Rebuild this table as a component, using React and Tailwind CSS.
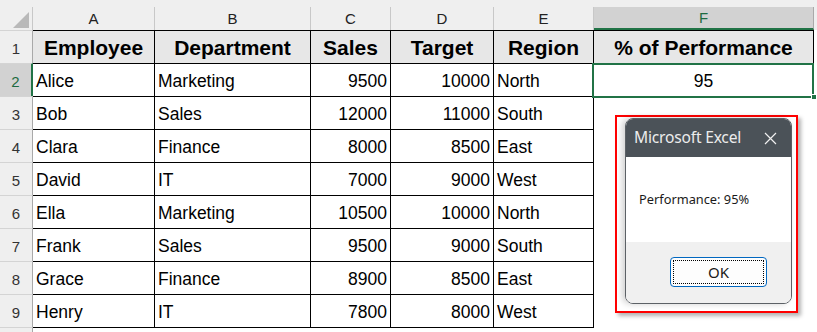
import React from "react";

const rows = [
  ["Alice", "Marketing", 9500, 10000, "North"],
  ["Bob", "Sales", 12000, 11000, "South"],
  ["Clara", "Finance", 8000, 8500, "East"],
  ["David", "IT", 7000, 9000, "West"],
  ["Ella", "Marketing", 10500, 10000, "North"],
  ["Frank", "Sales", 9500, 9000, "South"],
  ["Grace", "Finance", 8900, 8500, "East"],
  ["Henry", "IT", 7800, 8000, "West"],
];

const cols = [
  { l: "A", w: "w-[122px]" },
  { l: "B", w: "w-[156px]" },
  { l: "C", w: "w-[80px]" },
  { l: "D", w: "w-[103px]" },
  { l: "E", w: "w-[100px]" },
];

const font = { fontFamily: '"Liberation Sans", Arial, sans-serif' };

function RowHeader({ n, selected, last }) {
  return (
    <div
      className={`w-[33px] shrink-0 flex items-center justify-center pt-[5px] text-[15px] ${
        selected
          ? "bg-[#d2d2d2] text-[#1e6b41] border-r-2 border-r-[#217346]"
          : "bg-[#efefef] text-[#333] border-r border-r-[#a9a9a9]"
      } border-t border-t-[#d4d4d4] ${last ? "h-[34px] border-b border-b-[#d4d4d4]" : "h-[33px]"}`}
    >
      {n}
    </div>
  );
}

export default function App() {
  return (
    <div className="w-[817px] h-[332px] bg-white overflow-hidden relative select-none" style={font}>
      {/* Column header strip */}
      <div className="flex items-end h-[30px] bg-[#efefef]">
        <div className="w-[33px] h-[23px] shrink-0 border-r border-r-[#c8c8c8] flex items-end justify-end pr-[2px] pb-[2px]">
          <svg width="17" height="16" viewBox="0 0 17 16">
            <polygon points="16,0 16,16 0,16" fill="#b9b9b9" />
          </svg>
        </div>
        {cols.map((c) => (
          <div
            key={c.l}
            className={`${c.w} h-[23px] shrink-0 border-r border-r-[#c8c8c8] flex items-center justify-center text-[15px] text-[#222] pt-[2px]`}
          >
            {c.l}
          </div>
        ))}
        <div className="w-[220px] h-[23px] shrink-0 bg-[#d2d2d2] border-b-2 border-b-[#217346] border-r border-r-[#a9a9a9] flex items-center justify-center text-[15px] text-[#1e6b41] pt-[2px]">
          F
        </div>
        <div className="flex-1 h-[23px]" />
      </div>

      {/* Row 1 header */}
      <div className="flex">
        <RowHeader n={1} />
        {["Employee", "Department", "Sales", "Target", "Region"].map((t, i) => (
          <div
            key={t}
            className={`${cols[i].w} h-[33px] shrink-0 bg-[#e7e7e7] border-t border-r border-black flex items-center justify-center font-bold text-[21px] text-black pt-[1px]`}
          >
            {t}
          </div>
        ))}
        <div className="w-[220px] h-[33px] shrink-0 bg-[#e7e7e7] border-t border-r border-black flex items-center justify-center font-bold text-[21px] text-black pt-[1px]">
          % of Performance
        </div>
      </div>

      {/* Data rows */}
      {rows.map((r, ri) => {
        const last = ri === rows.length - 1;
        const h = last ? "h-[34px] border-b" : "h-[33px]";
        return (
          <div key={ri} className="flex">
            <RowHeader n={ri + 2} selected={ri === 0} last={last} />
            <div className={`${cols[0].w} ${h} shrink-0 border-t border-r border-black flex items-center pl-[3px] pt-[3px] text-[17.5px] text-black`}>
              {r[0]}
            </div>
            <div className={`${cols[1].w} ${h} shrink-0 border-t border-r border-black flex items-center pl-[3px] pt-[3px] text-[17.5px] text-black`}>
              {r[1]}
            </div>
            <div className={`${cols[2].w} ${h} shrink-0 border-t border-r border-black flex items-center justify-end pr-[3px] pt-[3px] text-[17.5px] text-black`}>
              {r[2]}
            </div>
            <div className={`${cols[3].w} ${h} shrink-0 border-t border-r border-black flex items-center justify-end pr-[3px] pt-[3px] text-[17.5px] text-black`}>
              {r[3]}
            </div>
            <div className={`${cols[4].w} ${h} shrink-0 border-t border-r border-black flex items-center pl-[3px] pt-[3px] text-[17.5px] text-black`}>
              {r[4]}
            </div>
            {ri === 0 ? (
              <div className="relative w-[220px] h-[33px] shrink-0 border-t border-r border-black flex items-center justify-center pt-[3px] text-[17.5px] text-black">
                95
                <div className="absolute left-[-2px] top-[-1px] w-[222px] h-[35px] border-2 border-[#217346]" />
                <div className="absolute right-[-4px] bottom-[-4px] w-[6px] h-[6px] bg-[#217346] border border-white" />
              </div>
            ) : (
              <div className={`w-[220px] h-[33px] shrink-0`} />
            )}
          </div>
        );
      })}

      {/* Row 10 partial */}
      <div className="flex">
        <div className="w-[33px] h-[20px] shrink-0 bg-[#efefef] border-r border-r-[#a9a9a9]" />
      </div>

      {/* Message box overlay with red highlight */}
      <div className="absolute left-[615px] top-[115px] w-[183px] h-[198px] border-2 border-[#ff0000] shadow-[3px_3px_4px_rgba(0,0,0,0.3)] bg-white pl-[8px] pt-[1px]">
        <div
          className="w-[167px] h-[186px] rounded-[8px] border border-[#5c6166] overflow-hidden flex flex-col shadow-[-3px_0_6px_rgba(0,0,0,0.18)]"
          style={{ fontFamily: '"Noto Sans", "Open Sans", sans-serif' }}
        >
          <div className="h-[38px] shrink-0 bg-[#4b5258] flex items-center justify-between pl-[8px] pr-[14px]">
            <span className="text-[15.6px] text-[#ececec] tracking-[-0.2px]">Microsoft Excel</span>
            <svg width="13" height="13" viewBox="0 0 13 13">
              <path d="M1 1 L12 12 M12 1 L1 12" stroke="#f0f0f0" strokeWidth="1.2" />
            </svg>
          </div>
          <div className="h-[85px] shrink-0 bg-white flex items-center pl-[13px]">
            <span className="text-[12.8px] text-[#1a1a1a]">Performance: 95%</span>
          </div>
          <div className="flex-1 bg-[#f0f0f0] pl-[44px] pt-[15px]">
            <div className="w-[97px] h-[30px] rounded-[4px] border border-[#0067c0] bg-[#fdfdfd] p-[2px]">
              <div className="w-full h-full border border-dotted border-black flex items-center justify-center text-[15px] text-[#1a1a1a]">
                OK
              </div>
            </div>
          </div>
        </div>
      </div>
    </div>
  );
}
